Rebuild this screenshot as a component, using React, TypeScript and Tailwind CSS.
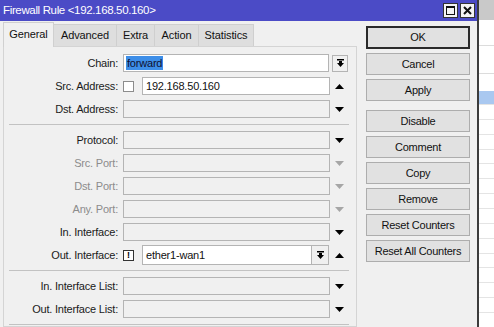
import React from "react";

const font = { fontFamily: '"Liberation Sans", Arial, sans-serif' };

function DownArrow({ gray = false }: { gray?: boolean }) {
  return (
    <svg width="9" height="5" viewBox="0 0 9 5">
      <polygon points="0,0 9,0 4.5,5" fill={gray ? "#a6a6a6" : "#000"} />
    </svg>
  );
}

function UpArrow() {
  return (
    <svg width="9" height="5" viewBox="0 0 9 5">
      <polygon points="0,5 9,5 4.5,0" fill="#000" />
    </svg>
  );
}

function BarDown() {
  return (
    <svg width="7" height="8" viewBox="0 0 7 8">
      <rect x="0" y="0" width="7" height="1.5" fill="#000" />
      <rect x="2" y="2" width="3" height="2" fill="#000" />
      <polygon points="0,4 7,4 3.5,8" fill="#000" />
    </svg>
  );
}

function Row({
  label,
  gray = false,
  children,
}: {
  label: string;
  gray?: boolean;
  children: React.ReactNode;
}) {
  return (
    <div className="flex h-[18px] items-center">
      <div
        className={`w-[115px] shrink-0 pr-[1px] text-right tracking-[-0.2px] ${gray ? "text-[#8c8c8c]" : "text-[#1a1a1a]"}`}
      >
        {label}
      </div>
      <div className="ml-[4px] flex h-full items-center">{children}</div>
    </div>
  );
}

function EmptyField({ gray = false }: { gray?: boolean }) {
  return (
    <>
      <div className="h-[18px] w-[207px] border border-[#b4b4b4] bg-[#f0f0f0]" />
      <div className="flex w-[19px] justify-center">
        <DownArrow gray={gray} />
      </div>
    </>
  );
}

function Sep() {
  return (
    <div className="flex h-[3px] items-center pl-[5px] pr-[7px]">
      <div className="h-px w-full bg-[#c2c2c2]" />
    </div>
  );
}

function Btn({ children, def = false, extra = "" }: { children: string; def?: boolean; extra?: string }) {
  return (
    <div
      className={`flex w-[104px] items-center justify-center bg-[#e1e1e1] text-[#111] ${
        def ? "h-[23px] border-2 border-[#2a2a2a]" : "h-[22px] border border-[#adadad]"
      } ${extra}`}
    >
      {children}
    </div>
  );
}

export default function App() {
  const tabs = ["Advanced", "Extra", "Action", "Statistics"];
  const tabW = ["w-[63px]", "w-[38px]", "w-[44px]", "w-[55px]"];
  return (
    <div className="flex h-[327px] w-[494px] overflow-hidden bg-white text-[11px]" style={font}>
      {/* window */}
      <div className="flex w-[479px] shrink-0 flex-col border-r-2 border-[#3c3c3c] bg-[#f0f0f0]">
        <div className="flex h-[21px] shrink-0 items-center justify-between bg-[#4b4bc6] pl-[3px] pr-[2px]">
          <span className="text-[11.5px] tracking-[-0.35px] text-white">Firewall Rule &lt;192.168.50.160&gt;</span>
          <div className="flex gap-[2px]">
            <div className="flex h-[15px] w-[15px] items-center justify-center border border-[#333] bg-[#f4f4f4]">
              <div className="h-[9px] w-[9px] border border-t-2 border-[#111]" />
            </div>
            <div className="flex h-[15px] w-[15px] items-center justify-center border border-[#333] bg-[#f4f4f4]">
              <svg width="9" height="9" viewBox="0 0 9 9">
                <path d="M1 1 L8 8 M8 1 L1 8" stroke="#111" strokeWidth="2" />
              </svg>
            </div>
          </div>
        </div>

        <div className="flex flex-1">
          {/* left: tabs + form */}
          <div className="flex w-[357px] shrink-0 flex-col pl-[3px]">
            <div className="flex h-[25px] items-end">
              <div className="relative z-10 -mb-px flex h-[25px] w-[51px] items-center justify-center border border-b-0 border-[#d0d0d0] bg-[#f0f0f0] pb-[2px] tracking-[-0.1px] text-[#111]">
                General
              </div>
              {tabs.map((t, i) => (
                <div
                  key={t}
                  className={`flex h-[22px] ${tabW[i]} items-center justify-center border border-b-0 border-l-0 border-[#cfcfcf] bg-[#dedede] tracking-[-0.1px] text-[#111]`}
                >
                  {t}
                </div>
              ))}
            </div>
            <div className="flex flex-1 flex-col gap-[5px] border border-[#d4d4d4] pt-[7px]">
              <Row label="Chain:">
                <div className="flex h-[18px] w-[206px] items-center border border-[#b4b4b4] bg-white pl-[2px] tracking-[-0.2px]">
                  <span className="bg-[#3d8ee8] px-px leading-[14px] text-[#101030]">forward</span>
                </div>
                <div className="ml-[3px] flex h-[17px] w-[16px] items-center justify-center border border-[#b4b4b4] bg-[#f0f0f0]">
                  <BarDown />
                </div>
              </Row>
              <Row label="Src. Address:">
                <div className="h-[11px] w-[11px] border border-[#8c8c8c] bg-white" />
                <div className="ml-[8px] flex h-[18px] w-[188px] items-center border border-[#b4b4b4] bg-white pl-[3px] tracking-[-0.2px] text-[#111]">
                  192.168.50.160
                </div>
                <div className="flex w-[19px] justify-center">
                  <UpArrow />
                </div>
              </Row>
              <Row label="Dst. Address:">
                <EmptyField />
              </Row>
              <Sep />
              <Row label="Protocol:">
                <EmptyField />
              </Row>
              <Row label="Src. Port:" gray>
                <EmptyField gray />
              </Row>
              <Row label="Dst. Port:" gray>
                <EmptyField gray />
              </Row>
              <Row label="Any. Port:" gray>
                <EmptyField gray />
              </Row>
              <Row label="In. Interface:">
                <EmptyField />
              </Row>
              <Row label="Out. Interface:">
                <div className="flex h-[11px] w-[11px] items-center justify-center border border-[#333] bg-white text-[9px] font-bold leading-none text-black">
                  !
                </div>
                <div className="ml-[8px] flex h-[20px] w-[187px] items-center border border-[#b4b4b4] bg-white">
                  <span className="flex-1 pl-[3px] tracking-[-0.2px] text-[#111]">ether1-wan1</span>
                  <div className="flex h-full w-[17px] items-center justify-center border-l border-[#b4b4b4] bg-[#f0f0f0]">
                    <BarDown />
                  </div>
                </div>
                <div className="flex w-[20px] justify-center">
                  <UpArrow />
                </div>
              </Row>
              <Sep />
              <Row label="In. Interface List:">
                <EmptyField />
              </Row>
              <Row label="Out. Interface List:">
                <EmptyField />
              </Row>
              <Sep />
            </div>
          </div>

          {/* right: buttons */}
          <div className="flex flex-col gap-[4px] pl-[9px] pt-[5px] tracking-[-0.25px]">
            <Btn def>OK</Btn>
            <Btn>Cancel</Btn>
            <Btn>Apply</Btn>
            <Btn extra="mt-[5px]">Disable</Btn>
            <Btn>Comment</Btn>
            <Btn>Copy</Btn>
            <Btn>Remove</Btn>
            <Btn>Reset Counters</Btn>
            <Btn>Reset All Counters</Btn>
          </div>
        </div>
      </div>

      {/* background list behind window */}
      <div className="flex flex-1 flex-col">
        <div className="h-[20px] bg-[#c9c9c9]" />
        <div className="h-[26px] border-b border-[#dcdcdc]" />
        <div className="h-[29px] border-b border-[#dcdcdc]" />
        <div className="h-[17px]" />
        <div className="h-[13px] bg-[#a9c8f0]" />
        {Array.from({ length: 15 }).map((_, i) => (
          <div key={i} className="h-[15px] border-t border-[#e4e4e4]" />
        ))}
      </div>
    </div>
  );
}
